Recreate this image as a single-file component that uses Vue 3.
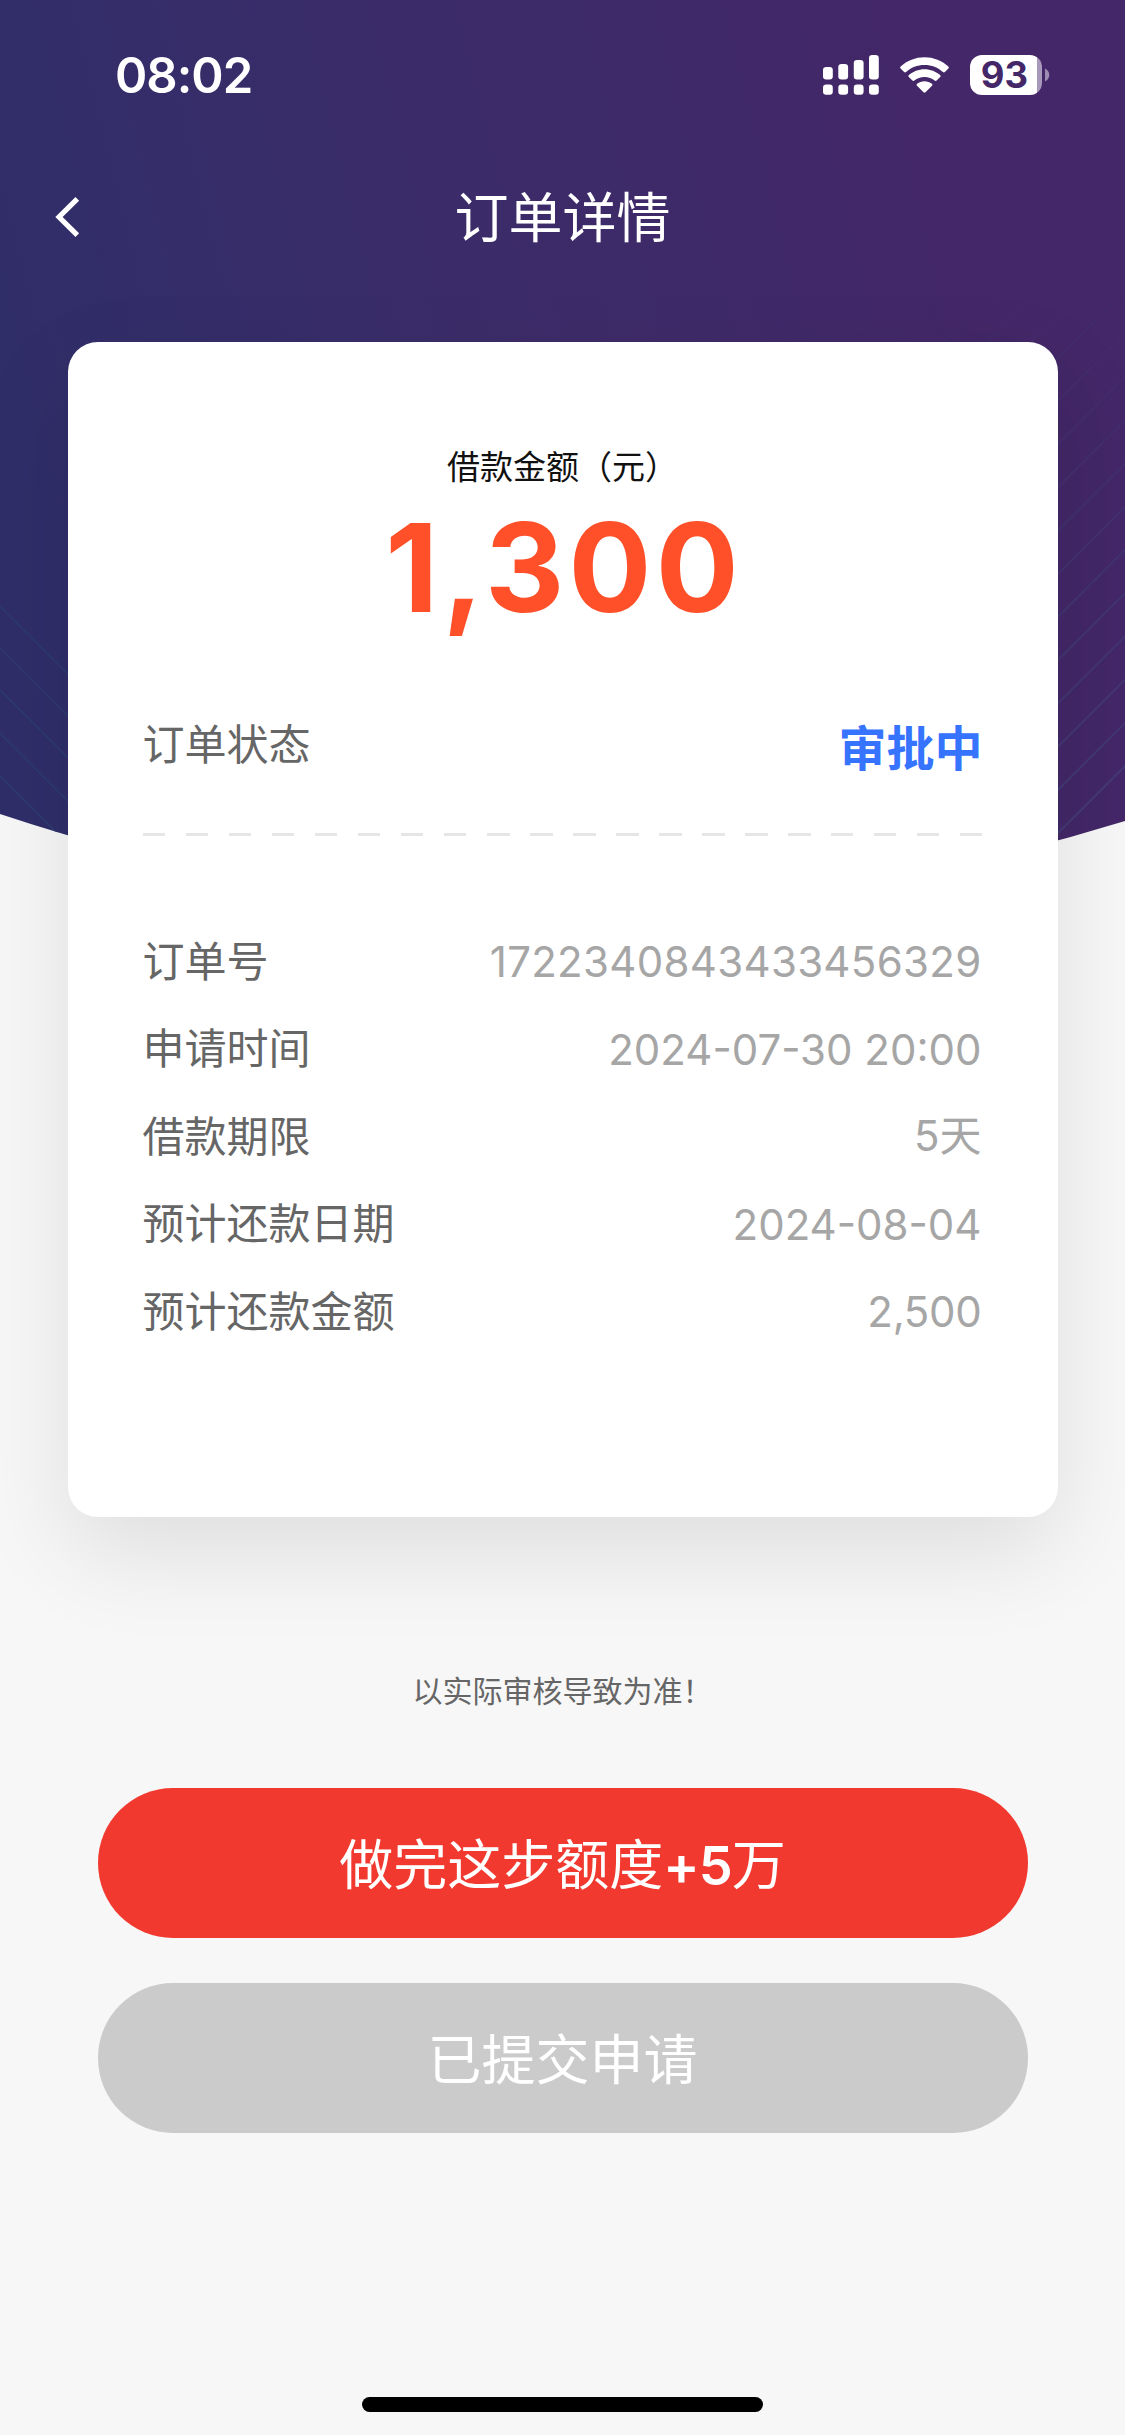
<script setup>
const title = '订单详情'
const rows = [
  { label: '订单号', value: '1722340843433456329', kind: 'serial' },
  { label: '申请时间', value: '2024-07-30 20:00', kind: 'time' },
  { label: '借款期限', value: '5天', kind: 'term' },
  { label: '预计还款日期', value: '2024-08-04', kind: 'date' },
  { label: '预计还款金额', value: '2,500', kind: 'sum' },
]
const signal = [
  { x: 0, top: 12 },
  { x: 15.3, top: 9 },
  { x: 30.8, top: 5 },
  { x: 46, top: 0 },
]
const rightLines = Array.from({ length: 15 }, (_, i) => 1891 - i * 43.2)
const leftLines = [606, 648, 690, 733, 776]
</script>

<template>
  <main class="page">
    <svg class="backdrop" viewBox="0 0 1125 920" aria-hidden="true">
      <defs>
        <linearGradient id="sky" gradientUnits="userSpaceOnUse" x1="20" y1="500" x2="960" y2="270">
          <stop offset="0" stop-color="#2f2e69" />
          <stop offset="0.5" stop-color="#3b2c69" />
          <stop offset="1" stop-color="#432768" />
        </linearGradient>
        <linearGradient id="fade" gradientUnits="userSpaceOnUse" x1="0" y1="270" x2="0" y2="800">
          <stop offset="0" stop-color="#fff" stop-opacity="0.08" />
          <stop offset="1" stop-color="#fff" stop-opacity="1" />
        </linearGradient>
        <mask id="reveal"><rect y="270" width="1125" height="650" fill="url(#fade)" /></mask>
        <clipPath id="arch"><path d="M0 0H1125V821Q840 909 562 909Q285 909 0 814Z" /></clipPath>
      </defs>
      <g clip-path="url(#arch)">
        <rect width="1125" height="920" fill="url(#sky)" />
        <g mask="url(#reveal)" fill="none" stroke-width="2">
          <path v-for="c in rightLines" :key="c" :d="`M${c - 900} 900L1140 ${c - 1140}`" stroke="#433a75" />
          <path v-for="y in leftLines" :key="y" :d="`M0 ${y}L200 ${y + 200}`" stroke="#2f3a70" />
        </g>
      </g>
    </svg>

    <header class="status">
      <span class="clock">08:02</span>
      <div class="indicators">
        <svg class="signal" width="56" height="40" viewBox="0 0 56 40" fill="#fff">
          <template v-for="b in signal" :key="b.x">
            <rect :x="b.x" :y="b.top" width="9.8" :height="24.5 - b.top" rx="3.2" />
            <rect :x="b.x" y="29.5" width="9.8" height="10.3" rx="3.2" />
          </template>
        </svg>
        <svg class="wifi" width="49" height="36" viewBox="0 0 49 36" fill="#fff">
          <path d="M24.5 0.2C33.5 0.2 42 3.6 48.3 9.5C49 10.1 49 10.9 48.4 11.5L44.9 15C44.3 15.6 43.5 15.6 42.9 15C38 10.5 31.6 8 24.5 8S11 10.5 6.1 15C5.5 15.6 4.7 15.6 4.1 15L.6 11.5C0 10.9 0 10.1 .7 9.5C7 3.6 15.5 .2 24.5 .2Z" />
          <path d="M24.5 12.2C30.5 12.2 36 14.5 40.1 18.1C40.8 18.7 40.8 19.5 40.2 20.1L36.6 23.5C36 24.1 35.3 24.1 34.6 23.5C31.9 21.2 28.4 19.9 24.5 19.9S17.1 21.2 14.4 23.5C13.7 24.1 13 24.1 12.4 23.5L8.8 20.1C8.2 19.5 8.2 18.7 8.9 18.1C13 14.5 18.5 12.2 24.5 12.2Z" />
          <path d="M24.5 24.2C27.3 24.2 29.9 25.1 31.9 26.7C32.6 27.3 32.6 28.1 32 28.7L25.5 35.2C24.9 35.8 24.1 35.8 23.5 35.2L17 28.7C16.4 28.1 16.4 27.3 17.1 26.7C19.1 25.1 21.7 24.2 24.5 24.2Z" />
        </svg>
        <div class="battery">
          <span class="cell">93</span>
          <svg width="5" height="14" viewBox="0 0 5 14"><path d="M0 0.5C2.7 2 4.3 4 4.3 7S2.7 12 0 13.5Z" fill="#9d8cb1" /></svg>
        </div>
      </div>
    </header>

    <nav class="navbar">
      <svg class="back" width="26" height="42" viewBox="0 0 26 42">
        <path d="M22.3 2.8L4 21L22.3 39.2" fill="none" stroke="#fff" stroke-width="5.2" />
      </svg>
      <h1>{{ title }}</h1>
    </nav>

    <section class="card">
      <p class="caption">借款金额（元）</p>
      <p class="amount">1,300</p>
      <div class="state">
        <span class="label">订单状态</span>
        <strong>审批中</strong>
      </div>
      <div class="divider"></div>
      <div class="rows">
        <div v-for="r in rows" :key="r.label" class="row">
          <span class="label">{{ r.label }}</span>
          <span class="value" :class="r.kind">{{ r.value }}</span>
        </div>
      </div>
    </section>

    <p class="hint">以实际审核导致为准！</p>

    <div class="actions">
      <button class="primary">做完这步额度<b>+5</b>万</button>
      <button class="muted">已提交申请</button>
    </div>

    <div class="home"></div>
  </main>
</template>

<style>
body {
  margin: 0;
  background: #f7f7f7;
}
</style>

<style scoped>
.page {
  position: relative;
  box-sizing: border-box;
  display: flex;
  flex-direction: column;
  width: 1125px;
  height: 2435px;
  overflow: hidden;
  background: #f7f7f7;
  font-family: Inter, "Noto Sans CJK SC", sans-serif;
}
.page > * {
  flex-shrink: 0;
}
p,
h1 {
  margin: 0;
}
.backdrop {
  position: absolute;
  top: 0;
  left: 0;
  width: 1125px;
  height: 920px;
}
.status {
  position: relative;
  display: flex;
  justify-content: space-between;
  align-items: center;
  height: 150px;
  padding: 0 75px 0 115px;
}
.clock {
  padding-top: 1px;
  color: #fff;
  font-size: 49px;
  font-weight: 600;
  line-height: 60px;
  letter-spacing: -1px;
}
.indicators {
  display: flex;
  align-items: center;
}
.wifi {
  margin-left: 21px;
}
.battery {
  display: flex;
  align-items: center;
  gap: 3px;
  margin-left: 21px;
}
.cell {
  box-sizing: border-box;
  width: 72px;
  height: 40px;
  padding-right: 3px;
  border-radius: 12px;
  background: linear-gradient(90deg, #fff 67px, #a898b9 67px);
  color: #432768;
  font-size: 36.5px;
  font-weight: 700;
  line-height: 40px;
  text-align: center;
}
.navbar {
  position: relative;
  display: grid;
  grid-template-columns: 100px 1fr 100px;
  align-items: center;
  height: 134px;
}
.back {
  margin-left: 55px;
}
h1 {
  padding-top: 3px;
  color: #fff;
  font-size: 54px;
  font-weight: 400;
  line-height: 80px;
  text-align: center;
}
.card {
  position: relative;
  box-sizing: border-box;
  width: 990px;
  height: 1175px;
  margin: 58px auto 0;
  padding: 100px 75px 0;
  border-radius: 30px;
  background: #fff;
  box-shadow: 0 36px 96px rgba(0, 0, 0, 0.1);
}
.caption {
  color: #111;
  font-size: 33px;
  line-height: 50px;
  text-align: center;
}
.amount {
  padding: 1px 0 0 3px;
  color: #ff5029;
  font-size: 123px;
  font-weight: 700;
  line-height: 150px;
  letter-spacing: 4.2px;
  text-align: center;
}
.state {
  display: flex;
  justify-content: space-between;
  align-items: center;
  height: 70px;
  margin-top: 67px;
}
.label {
  padding-bottom: 7px;
  color: #666;
  font-size: 42px;
}
.state strong {
  padding-bottom: 1px;
  color: #3673ff;
  font-size: 48px;
  font-weight: 700;
}
.divider {
  height: 3px;
  margin-top: 53px;
  background: repeating-linear-gradient(90deg, #e6e6e6 0 22.5px, transparent 22.5px 43px);
}
.rows {
  margin-top: 82px;
}
.row {
  display: flex;
  justify-content: space-between;
  align-items: center;
  height: 87.5px;
}
.value {
  margin-right: 1px;
  color: #a6a6a6;
  font-size: 42px;
}
.serial {
  letter-spacing: 0.3px;
}
.term {
  padding-bottom: 8px;
}
.sum {
  letter-spacing: -0.3px;
}
.hint {
  margin-top: 150px;
  color: #666;
  font-size: 30px;
  line-height: 48px;
  text-align: center;
}
.actions {
  display: flex;
  flex-direction: column;
  gap: 45px;
  margin: 73px 97.5px 0;
}
button {
  height: 150px;
  padding: 5px 0 0;
  border: 0;
  border-radius: 75px;
  color: #fff;
  font: 400 54px/80px Inter, "Noto Sans CJK SC", sans-serif;
}
button b {
  font-weight: 600;
  letter-spacing: -1px;
}
.primary {
  background: #f2392f;
}
.muted {
  background: #cbcbcb;
}
.home {
  width: 401px;
  height: 15px;
  margin: auto auto 23px;
  border-radius: 8px;
  background: #000;
}
</style>
